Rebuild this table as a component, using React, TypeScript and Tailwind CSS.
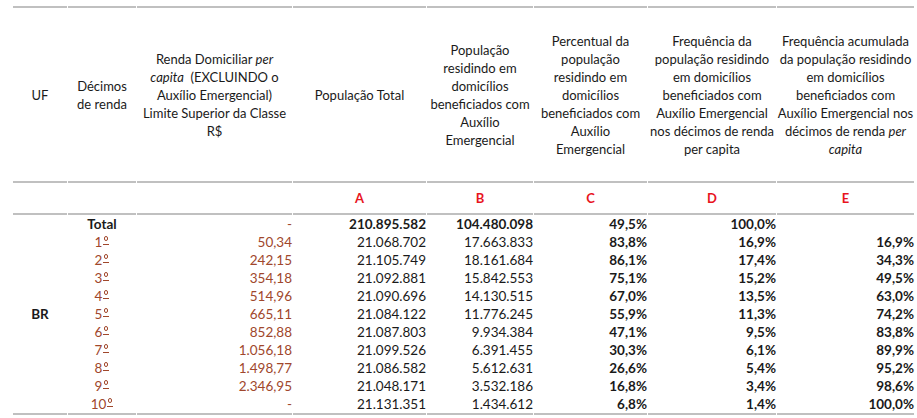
const rows = [
  { d: "1", r: "50,34", a: "21.068.702", b: "17.663.833", c: "83,8%", f: "16,9%", e: "16,9%" },
  { d: "2", r: "242,15", a: "21.105.749", b: "18.161.684", c: "86,1%", f: "17,4%", e: "34,3%" },
  { d: "3", r: "354,18", a: "21.092.881", b: "15.842.553", c: "75,1%", f: "15,2%", e: "49,5%" },
  { d: "4", r: "514,96", a: "21.090.696", b: "14.130.515", c: "67,0%", f: "13,5%", e: "63,0%" },
  { d: "5", r: "665,11", a: "21.084.122", b: "11.776.245", c: "55,9%", f: "11,3%", e: "74,2%" },
  { d: "6", r: "852,88", a: "21.087.803", b: "9.934.384", c: "47,1%", f: "9,5%", e: "83,8%" },
  { d: "7", r: "1.056,18", a: "21.099.526", b: "6.391.455", c: "30,3%", f: "6,1%", e: "89,9%" },
  { d: "8", r: "1.498,77", a: "21.086.582", b: "5.612.631", c: "26,6%", f: "5,4%", e: "95,2%" },
  { d: "9", r: "2.346,95", a: "21.048.171", b: "3.532.186", c: "16,8%", f: "3,4%", e: "98,6%" },
  { d: "10", r: "-", a: "21.131.351", b: "1.434.612", c: "6,8%", f: "1,4%", e: "100,0%" },
];

const head = "align-middle text-center whitespace-nowrap font-normal p-0 text-[13px]";
const line = "border-t-2 border-[#c0c0c0]";

function Ordinal({ n }: { n: string }) {
  return (
    <span>
      {n}
      <span className="inline-block align-top ml-px mt-[3px] w-[6px] h-[9px] border-b border-current relative">
        <span className="absolute left-[1px] top-0 w-[4px] h-[5px] rounded-full border border-current" />
      </span>
    </span>
  );
}

export default function App() {
  return (
    <div className="bg-white w-[917px] h-[418px] pt-[6px] pl-[13px] text-[13.5px] leading-[18px] text-[#1a1a1a] font-['Lato',_'Open_Sans',_sans-serif]">
      <table className="table-fixed w-[896px] border-separate border-spacing-x-px border-spacing-y-0 -ml-px">
        <colgroup>
          <col className="w-[54px]" />
          <col className="w-[68px]" />
          <col className="w-[155px]" />
          <col className="w-[133px]" />
          <col className="w-[106px]" />
          <col className="w-[113px]" />
          <col className="w-[128px]" />
          <col className="w-[137px]" />
        </colgroup>
        <thead>
          <tr className="h-[175px]">
            <th className={`${head} ${line}`}>UF</th>
            <th className={`${head} ${line}`}>Décimos<br />de renda</th>
            <th className={`${head} ${line}`}>
              Renda Domiciliar <i>per</i>
              <br />
              <i>capita</i>&nbsp; (EXCLUINDO o<br />
              Auxílio Emergencial)<br />
              Limite Superior da Classe<br />
              R$
            </th>
            <th className={`${head} ${line}`}>População Total</th>
            <th className={`${head} ${line}`}>
              População<br />residindo em<br />domicílios<br />beneficiados com<br />Auxílio<br />Emergencial
            </th>
            <th className={`${head} ${line}`}>
              Percentual da<br />população<br />residindo em<br />domicílios<br />beneficiados com<br />Auxílio<br />Emergencial
            </th>
            <th className={`${head} ${line}`}>
              Frequência da<br />população residindo<br />em domicílios<br />beneficiados com<br />Auxílio Emergencial<br />nos décimos de renda<br />per capita
            </th>
            <th className={`${head} ${line}`}>
              Frequência acumulada<br />da população residindo<br />em domicílios<br />beneficiados com<br />Auxílio Emergencial nos<br />décimos de renda <i>per</i>
              <br />
              <i>capita</i>
            </th>
          </tr>
          <tr className="h-[32px]">
            <th className={line} />
            <th className={line} />
            <th className={line} />
            {["A", "B", "C", "D", "E"].map((l) => (
              <th key={l} className={`${line} text-center align-middle font-bold text-[#e8141e] p-0 text-[13px]`}>
                {l}
              </th>
            ))}
          </tr>
        </thead>
        <tbody className="[&_td]:p-0 [&_td]:h-[18px] [&_td]:whitespace-nowrap [&_td]:leading-[18px]">
          <tr className="h-[20px]">
            <td rowSpan={11} className={`${line} border-b-2 text-center align-middle font-bold pr-[4px]`}>BR</td>
            <td className={`${line} text-center font-bold`}>Total</td>
            <td className={`${line} text-right text-[#a0472c] pr-[18px]`}>-</td>
            <td className={`${line} text-right font-bold pr-[8px]`}>210.895.582</td>
            <td className={`${line} text-right font-bold pr-[4px]`}>104.480.098</td>
            <td className={`${line} text-right font-bold pr-[2px]`}>49,5%</td>
            <td className={`${line} text-right font-bold pr-[3px]`}>100,0%</td>
            <td className={line} />
          </tr>
          {rows.map((r, i) => {
            const last = i === rows.length - 1 ? "border-b-2 border-[#c0c0c0]" : "";
            return (
              <tr key={r.d} className={i === rows.length - 1 ? "h-[20px]" : "h-[18px]"}>
                <td className={`${last} text-center text-[#a0472c]`}>
                  <Ordinal n={r.d} />
                </td>
                <td className={`${last} text-right text-[#a0472c] ${r.r === "-" ? "pr-[18px]" : "pr-[5px]"}`}>{r.r}</td>
                <td className={`${last} text-right pr-[8px]`}>{r.a}</td>
                <td className={`${last} text-right pr-[4px]`}>{r.b}</td>
                <td className={`${last} text-right font-bold pr-[2px]`}>{r.c}</td>
                <td className={`${last} text-right font-bold pr-[3px]`}>{r.f}</td>
                <td className={`${last} text-right font-bold pr-[1px]`}>{r.e}</td>
              </tr>
            );
          })}
        </tbody>
      </table>
    </div>
  );
}
